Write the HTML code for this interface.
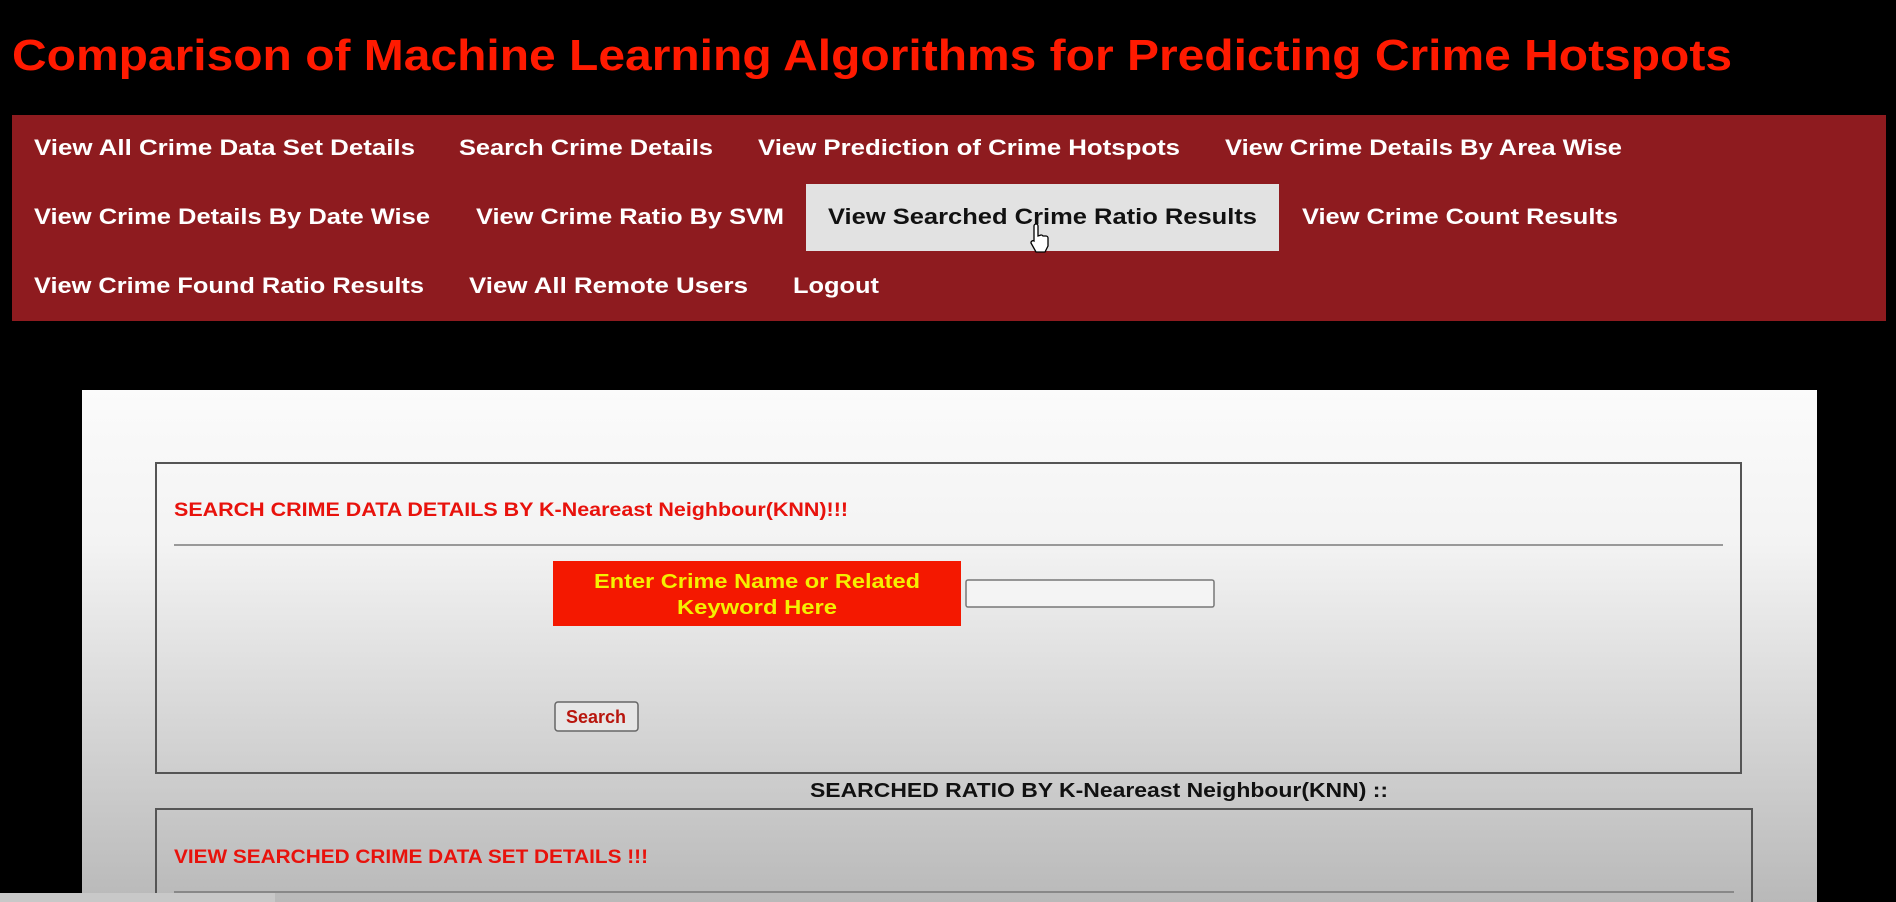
<!DOCTYPE html>
<html><head><meta charset="utf-8"><style>
html,body{margin:0;padding:0;background:#000;width:1896px;height:902px;overflow:hidden}
svg{display:block}
text{font-family:"Liberation Sans",sans-serif;font-weight:bold}
</style></head><body>
<svg width="1896" height="902" viewBox="0 0 1896 902" xmlns="http://www.w3.org/2000/svg">
<defs>
<linearGradient id="g" x1="0" y1="0" x2="0" y2="1">
<stop offset="0" stop-color="#fbfbfb"/><stop offset="0.3" stop-color="#f3f3f3"/><stop offset="1" stop-color="#b9b9b9"/>
</linearGradient>
</defs>
<rect width="1896" height="902" fill="#000"/>
<text x="12" y="70" font-size="44" fill="#ff1a00" textLength="1720" lengthAdjust="spacingAndGlyphs">Comparison of Machine Learning Algorithms for Predicting Crime Hotspots</text>
<rect x="12" y="115" width="1874" height="206" fill="#8e1b1f"/>
<rect x="806" y="184" width="473" height="67" fill="#e2e2e2"/>
<g font-size="22" fill="#fff">
<text x="34" y="155" textLength="381" lengthAdjust="spacingAndGlyphs">View All Crime Data Set Details</text>
<text x="459" y="155" textLength="254" lengthAdjust="spacingAndGlyphs">Search Crime Details</text>
<text x="758" y="155" textLength="422" lengthAdjust="spacingAndGlyphs">View Prediction of Crime Hotspots</text>
<text x="1225" y="155" textLength="397" lengthAdjust="spacingAndGlyphs">View Crime Details By Area Wise</text>
<text x="34" y="224" textLength="396" lengthAdjust="spacingAndGlyphs">View Crime Details By Date Wise</text>
<text x="476" y="224" textLength="308" lengthAdjust="spacingAndGlyphs">View Crime Ratio By SVM</text>
<text x="828" y="224" textLength="429" lengthAdjust="spacingAndGlyphs" fill="#111">View Searched Crime Ratio Results</text>
<text x="1302" y="224" textLength="316" lengthAdjust="spacingAndGlyphs">View Crime Count Results</text>
<text x="34" y="293" textLength="390" lengthAdjust="spacingAndGlyphs">View Crime Found Ratio Results</text>
<text x="469" y="293" textLength="279" lengthAdjust="spacingAndGlyphs">View All Remote Users</text>
<text x="793" y="293" textLength="86" lengthAdjust="spacingAndGlyphs">Logout</text>
</g>
<path d="M1034 234 v-8 a2 2 0 0 1 4 0 v10 l3 -1 a2 2 0 0 1 2 1 l3 0 a2 2 0 0 1 2 2 v8 l-3 6 h-9 l-5 -9 a2 2 0 0 1 3 -2 z" fill="#fff" stroke="#000" stroke-width="1.3"/>
<rect x="82" y="390" width="1735" height="512" fill="url(#g)"/>
<rect x="156" y="463" width="1585" height="310" fill="none" stroke="#555" stroke-width="2"/>
<text x="174" y="516" font-size="19" fill="#e8120c" textLength="674" lengthAdjust="spacingAndGlyphs">SEARCH CRIME DATA DETAILS BY K-Neareast Neighbour(KNN)!!!</text>
<rect x="174" y="544" width="1549" height="2" fill="#999"/>
<rect x="553" y="561" width="408" height="65" fill="#f41800"/>
<g font-size="20" fill="#f4f000" text-anchor="middle">
<text x="757" y="588" textLength="326" lengthAdjust="spacingAndGlyphs">Enter Crime Name or Related</text>
<text x="757" y="614" textLength="160" lengthAdjust="spacingAndGlyphs">Keyword Here</text>
</g>
<rect x="966" y="580" width="248" height="27" rx="2" fill="#f4f4f4" stroke="#777" stroke-width="1.5"/>
<rect x="555" y="702" width="83" height="29" rx="3" fill="#e6e6e6" stroke="#666" stroke-width="1.5"/>
<text x="596" y="723" font-size="18" fill="#b8160e" text-anchor="middle" textLength="60" lengthAdjust="spacingAndGlyphs">Search</text>
<text x="810" y="797" font-size="20" fill="#111" textLength="578" lengthAdjust="spacingAndGlyphs">SEARCHED RATIO BY K-Neareast Neighbour(KNN) ::</text>
<rect x="156" y="809" width="1596" height="100" fill="none" stroke="#555" stroke-width="2"/>
<text x="174" y="863" font-size="19" fill="#e8120c" textLength="474" lengthAdjust="spacingAndGlyphs">VIEW SEARCHED CRIME DATA SET DETAILS !!!</text>
<rect x="174" y="891" width="1560" height="2" fill="#888"/>
<rect x="0" y="893" width="275" height="9" fill="#c8c8c8"/>
</svg>
</body></html>
